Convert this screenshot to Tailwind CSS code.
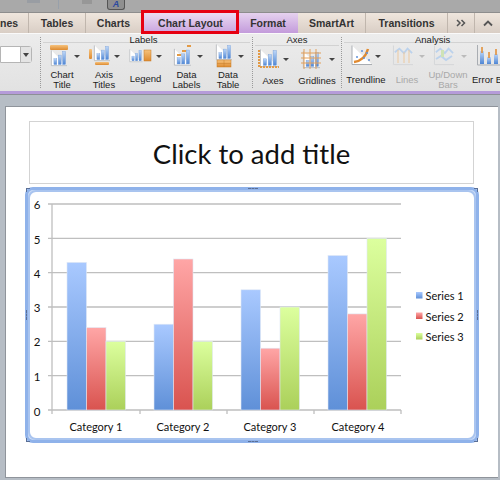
<!DOCTYPE html>
<html lang="en">
<head>
  <meta charset="UTF-8">
  <title>Chart Layout</title>
  <script src="https://cdn.jsdelivr.net/npm/@tailwindcss/browser@4"></script>
</head>
<body class="bg-[#b6bdc5]">

<svg class="absolute w-0 h-0">
  <defs>
    <linearGradient id="blue" x1="0" y1="0" x2="0" y2="1"><stop offset="0" stop-color="#a9c9ff"/><stop offset="1" stop-color="#5f90d8"/></linearGradient>
    <linearGradient id="red" x1="0" y1="0" x2="0" y2="1"><stop offset="0" stop-color="#ffa6a6"/><stop offset="1" stop-color="#d9534f"/></linearGradient>
    <linearGradient id="green" x1="0" y1="0" x2="0" y2="1"><stop offset="0" stop-color="#dcff9e"/><stop offset="1" stop-color="#abd05a"/></linearGradient>
    <linearGradient id="ibar" x1="0" y1="0" x2="0" y2="1"><stop offset="0" stop-color="#bcd6f8"/><stop offset="1" stop-color="#4f86d4"/></linearGradient>
    <linearGradient id="orange" x1="0" y1="0" x2="0" y2="1"><stop offset="0" stop-color="#f6c27c"/><stop offset="1" stop-color="#dd8a30"/></linearGradient>
    <symbol id="bars" viewBox="0 0 22 22" overflow="visible">
      <path d="M0.500 0.500V21.500H22" fill="#fff" stroke="#a9adb2"/>
      <rect x="4" y="12" width="4" height="8" fill="url(#ibar)" stroke="#6f9bd8" stroke-width=".5"/>
      <rect x="10" y="7" width="4" height="13" fill="url(#ibar)" stroke="#6f9bd8" stroke-width=".5"/>
      <rect x="16" y="2" width="4" height="18" fill="url(#ibar)" stroke="#6f9bd8" stroke-width=".5"/>
    </symbol>
    <symbol id="wave" viewBox="0 0 22 22" overflow="visible">
      <path d="M0.500 0.500V21.500H22" fill="none" stroke="#d4d6d8"/>
      <path d="M2 8l5-4 5 5 4-5 5 5" fill="none" stroke="#bcd2ec" stroke-width="2"/>
    </symbol>
  </defs>
</svg>

<div class="relative w-[500px] h-[480px] overflow-hidden flex flex-col font-['Liberation_Sans',sans-serif]">

  <!-- top toolbar -->
  <div class="h-[12px] shrink-0 bg-[#a9a9a9] flex items-start relative">
    <div class="ml-[27px] w-[13px] h-[3px] bg-[#999da3]"></div>
    <div class="ml-[18px] w-px h-[9px] bg-[#98a0aa]"></div>
    <div class="ml-[23px] w-[10px] h-[4px] bg-[#979797]"></div>
    <div class="ml-[15px] w-[18px] h-[10px] bg-[#8f8f8f] border border-t-0 border-[#555] rounded-b-[3px] text-[9px] leading-[9px] font-bold italic text-[#2b4aa0] text-center">A</div>
  </div>

  <!-- tabs -->
  <div class="h-[21px] shrink-0 flex text-[10.5px] font-bold text-[#333] leading-[20px] text-center bg-gradient-to-b from-[#efe6dd] to-[#d9cec5] border-t border-[#8d8d8d]">
    <div class="w-[29px] text-left border-r border-[#c0b6ad]">nes</div>
    <div class="w-[57px] border-r border-[#c0b6ad]">Tables</div>
    <div class="w-[55px]">Charts</div>
    <div class="w-[97px] bg-gradient-to-b from-[#ecdcf3] to-[#c9a3de] pl-[2px]">Chart Layout</div>
    <div class="w-[60px] bg-gradient-to-b from-[#e6d2ef] to-[#c39bdb]">Format</div>
    <div class="w-[68px] border-r border-[#c0b6ad]">SmartArt</div>
    <div class="w-[82px] border-r border-[#c0b6ad]">Transitions</div>
    <div class="w-[27px] border-r border-[#c0b6ad] flex items-center justify-center">
      <svg width="10" height="8" fill="none" stroke="#555" stroke-width="1.500"><path d="M1 1l3 3-3 3M5.500 1l3 3-3 3"/></svg>
    </div>
    <div class="flex-1 flex items-center justify-center">
      <svg width="10" height="7" fill="none" stroke="#555" stroke-width="1.800"><path d="M1 5.500l4-4 4 4"/></svg>
    </div>
  </div>

  <!-- ribbon -->
  <div class="h-[58px] shrink-0 bg-gradient-to-b from-[#ececec] to-[#e2e2e2] border-t border-[#fafafa] flex text-[9.5px] leading-[10px] text-[#222]">
    <div class="w-[41px] shrink-0 border-r border-dotted border-[#9a9a9a] my-[3px] pt-[9px]">
      <div class="w-[32px] h-[17px] flex border border-[#b5b5b5] rounded-r-[3px] bg-white">
        <div class="flex-1"></div>
        <div class="w-[11px] bg-[#e4e4e4] border-l border-[#b5b5b5] flex items-center justify-center">
          <div class="border-x-[3px] border-x-transparent border-t-[4px] border-t-[#444]"></div>
        </div>
      </div>
    </div>

    <!-- Labels -->
    <div class="w-[212px] shrink-0 border-r border-dotted border-[#9a9a9a] my-[3px] flex flex-col">
      <div class="h-[9px] leading-[5px] text-center border-b border-[#d2d2d2] mx-[2px] pr-[6px]">Labels</div>
      <div class="flex pt-[1px]">
        <div class="w-[42px] flex flex-col items-center">
          <svg width="40" height="23" class="block">
            <rect x="8" y="1" width="18" height="5" rx="1" fill="url(#orange)"/>
            <use href="#bars" x="9" y="6" width="16" height="16"/>
            <path d="M32 11h6l-3 3z" fill="#444"/>
          </svg>
          <div class="text-center mt-[3px]">Chart<br>Title</div>
        </div>
        <div class="w-[42px] flex flex-col items-center">
          <svg width="40" height="23" class="block">
            <rect x="5" y="5" width="3" height="10" rx="1" fill="url(#orange)"/>
            <use href="#bars" x="10" y="1" width="16" height="16"/>
            <rect x="11" y="18" width="14" height="3" rx="1" fill="url(#orange)"/>
            <path d="M30 11h6l-3 3z" fill="#444"/>
          </svg>
          <div class="text-center mt-[3px]">Axis<br>Titles</div>
        </div>
        <div class="w-[41px] flex flex-col items-center">
          <svg width="40" height="23" class="block">
            <use href="#bars" x="3" y="5" width="14" height="13"/>
            <rect x="18" y="6" width="7" height="11" fill="url(#orange)" stroke="#c67c2a" stroke-width=".5"/>
            <path d="M30 11h6l-3 3z" fill="#444"/>
          </svg>
          <div class="text-center mt-[7px]">Legend</div>
        </div>
        <div class="w-[41px] flex flex-col items-center">
          <svg width="40" height="23" class="block">
            <use href="#bars" x="7" y="4" width="17" height="18"/>
            <rect x="10" y="10" width="4" height="2" fill="#e39a45"/>
            <rect x="15" y="6" width="4" height="2" fill="#e39a45"/>
            <rect x="20" y="1" width="4" height="2" fill="#e39a45"/>
            <path d="M30 11h6l-3 3z" fill="#444"/>
          </svg>
          <div class="text-center mt-[3px]">Data<br>Labels</div>
        </div>
        <div class="w-[42px] flex flex-col items-center">
          <svg width="40" height="24" class="block">
            <use href="#bars" x="7" y="0" width="18" height="16"/>
            <rect x="9" y="16" width="14" height="7" fill="url(#orange)" stroke="#c67c2a" stroke-width=".5"/>
            <path d="M9 19.500h14M16 16v7" stroke="#c67c2a" stroke-width=".5"/>
            <path d="M30 11h6l-3 3z" fill="#444"/>
          </svg>
          <div class="text-center mt-[2px]">Data<br>Table</div>
        </div>
      </div>
    </div>

    <!-- Axes -->
    <div class="w-[89px] shrink-0 border-r border-dotted border-[#9a9a9a] my-[3px] flex flex-col">
      <div class="h-[9px] leading-[5px] text-center border-b border-[#d2d2d2] mx-[2px]">Axes</div>
      <div class="flex pt-[1px]">
        <div class="w-[40px] flex flex-col items-center pl-[2px]">
          <svg width="38" height="23" class="block">
            <use href="#bars" x="5" y="2" width="18" height="18"/>
            <path d="M4 3v17h20" fill="none" stroke="#e39a45" stroke-width="2" stroke-dasharray="2 1"/>
            <path d="M28 11h6l-3 3z" fill="#444"/>
          </svg>
          <div class="text-center mt-[6px] pr-[2px]">Axes</div>
        </div>
        <div class="w-[48px] flex flex-col items-center">
          <svg width="40" height="23" class="block">
            <use href="#bars" x="6" y="4" width="17" height="17"/>
            <path d="M4 6h20M4 11h20M4 16h20M7 2v20M13 2v20M19 2v20" fill="none" stroke="#e3a05a" stroke-width="1"/>
            <path d="M32 11h6l-3 3z" fill="#444"/>
          </svg>
          <div class="text-center mt-[6px]">Gridlines</div>
        </div>
      </div>
    </div>

    <!-- Analysis -->
    <div class="flex-1 min-w-0 my-[3px] flex flex-col">
      <div class="h-[9px] leading-[5px] border-b border-[#d2d2d2] ml-[2px] pl-[71px]">Analysis</div>
      <div class="flex pt-[1px]">
        <div class="w-[48px] shrink-0 flex flex-col items-center">
          <svg width="40" height="23" class="block">
            <path d="M6 1.500V20.500H26" fill="#fff" stroke="#a9adb2"/>
            <path d="M8 18c8-1 12-6 14-13" fill="none" stroke="#e08a30" stroke-width="2.500"/>
            <circle cx="11" cy="13" r="1" fill="#5f90d8"/><circle cx="18" cy="14" r="1" fill="#5f90d8"/><circle cx="21" cy="9" r="1" fill="#5f90d8"/><circle cx="16" cy="7" r="1" fill="#5f90d8"/><circle cx="23" cy="16" r="1" fill="#5f90d8"/>
            <path d="M29 11h6l-3 3z" fill="#444"/>
          </svg>
          <div class="text-center mt-[8px]">Trendline</div>
        </div>
        <div class="w-[34px] shrink-0 flex flex-col items-center text-[#a9a9a9]">
          <svg width="40" height="23" class="block shrink-0">
            <use href="#wave" x="6" y="1" width="20" height="20"/>
            <path d="M11 6v13M17 8v11M22 6v13" stroke="#ecc9a0"/>
            <path d="M32 11h6l-3 3z" fill="#bbb"/>
          </svg>
          <div class="text-center mt-[8px]">Lines</div>
        </div>
        <div class="w-[48px] shrink-0 flex flex-col items-center text-[#a9a9a9]">
          <svg width="40" height="23" class="block">
            <use href="#wave" x="6" y="1" width="20" height="20"/>
            <path d="M8 15l5-3 5 4 6-4" fill="none" stroke="#bcd2ec" stroke-width="2"/>
            <path d="M13 6h3v7h-3z" fill="#cfe3b6"/>
            <path d="M33 11h6l-3 3z" fill="#bbb"/>
          </svg>
          <div class="text-center mt-[3px] whitespace-nowrap">Up/Down<br>Bars</div>
        </div>
        <div class="w-[40px] shrink-0 flex flex-col items-start">
          <svg width="28" height="23" class="block ml-[5px]">
            <path d="M0.500 1V21H28" fill="none" stroke="#a9adb2"/>
            <rect x="3" y="7" width="4" height="13" fill="url(#ibar)"/>
            <rect x="10" y="13" width="4" height="7" fill="url(#ibar)"/>
            <rect x="17" y="10" width="4" height="10" fill="url(#ibar)"/>
            <path d="M5 3v6M12 8v6M19 5v6" stroke="#e08a30" stroke-width="1.500"/>
          </svg>
          <div class="mt-[8px] whitespace-nowrap">Error Bars</div>
        </div>
      </div>
    </div>
  </div>

  <!-- purple line under ribbon -->
  <div class="h-[4px] shrink-0 bg-[#b59bd9] border-b border-[#8d8f96]"></div>

  <!-- slide area -->
  <div class="flex-1 min-h-0 pt-[11px] pl-[5px] pr-[2px] pb-[3px] flex">
    <div class="flex-1 bg-white border-l border-t border-[#8f949b] pt-[14px] pl-[23px] pr-[24px] shadow-[0_1px_0_#8f949b]">
      <div class="h-[63px] pt-[3px] border border-[#d3d3d3] flex items-center justify-center text-[27.500px] text-[#111] font-['Lato',sans-serif]">Click to add title</div>

      <!-- chart frame -->
      <div class="relative mt-[3px] -ml-[4px] -mr-[5px] h-[256px] rounded-[8px] border-[3px] border-[#8fb2ea] bg-[#c9dbf7]">
        <div class="absolute inset-0 rounded-[8px] border-[2px] border-[#a9c4ef] bg-white overflow-hidden">
          <svg width="444" height="246" viewBox="30 192 444 246" class="block font-['Lato',sans-serif]" font-size="11" fill="#111">
            <g stroke="#bfbfbf" stroke-width="1.300">
              <path d="M48 204H401M48 238.300H401M48 272.700H401M48 307H401M48 341.300H401M48 375.700H401M48 410H401"/>
              <path d="M52 204V410M52 410v4M140 410v4M227 410v4M314 410v4M401 410v4" fill="none"/>
            </g>
            <g stroke="#dfe8f5" stroke-width=".6">
              <rect x="67" y="262.400" width="19.500" height="147.600" fill="url(#blue)"/>
              <rect x="86.500" y="327.600" width="19.500" height="82.400" fill="url(#red)"/>
              <rect x="106" y="341.300" width="19.500" height="68.700" fill="url(#green)"/>
              <rect x="154" y="324.200" width="19.500" height="85.800" fill="url(#blue)"/>
              <rect x="173.500" y="259" width="19.500" height="151" fill="url(#red)"/>
              <rect x="193" y="341.300" width="19.500" height="68.700" fill="url(#green)"/>
              <rect x="241" y="289.800" width="19.500" height="120.200" fill="url(#blue)"/>
              <rect x="260.500" y="348.200" width="19.500" height="61.800" fill="url(#red)"/>
              <rect x="280" y="307" width="19.500" height="103" fill="url(#green)"/>
              <rect x="328" y="255.500" width="19.500" height="154.500" fill="url(#blue)"/>
              <rect x="347.500" y="313.900" width="19.500" height="96.100" fill="url(#red)"/>
              <rect x="367" y="238.300" width="19.500" height="171.700" fill="url(#green)"/>
            </g>
            <g text-anchor="middle" font-size="11.500">
              <text x="37" y="209">6</text>
              <text x="37" y="244">5</text>
              <text x="37" y="278">4</text>
              <text x="37" y="312">3</text>
              <text x="37" y="346">2</text>
              <text x="37" y="381">1</text>
              <text x="37" y="416">0</text>
            </g>
            <g text-anchor="middle">
              <text x="96" y="431">Category 1</text>
              <text x="183" y="431">Category 2</text>
              <text x="270" y="431">Category 3</text>
              <text x="358" y="431">Category 4</text>
            </g>
            <rect x="416" y="292" width="6.500" height="6.500" fill="url(#blue)"/>
            <rect x="416" y="312.500" width="6.500" height="6.500" fill="url(#red)"/>
            <rect x="416" y="333" width="6.500" height="6.500" fill="url(#green)"/>
            <text x="425.500" y="300">Series 1</text>
            <text x="425.500" y="320.500">Series 2</text>
            <text x="425.500" y="341">Series 3</text>
          </svg>
        </div>
        <!-- resize handles -->
        <div class="absolute -top-[2px] -left-[2px] w-[4px] h-[4px] border-t border-l border-dashed border-[#5a6f96]"></div>
        <div class="absolute -top-[2px] left-[220px] w-[10px] border-t border-dashed border-[#5a6f96]"></div>
        <div class="absolute -top-[2px] -right-[2px] w-[4px] h-[4px] border-t border-r border-dashed border-[#5a6f96]"></div>
        <div class="absolute top-[120px] -left-[2px] h-[10px] border-l border-dashed border-[#5a6f96]"></div>
        <div class="absolute top-[120px] -right-[2px] h-[10px] border-r border-dashed border-[#5a6f96]"></div>
        <div class="absolute -bottom-[2px] -left-[2px] w-[4px] h-[4px] border-b border-l border-dashed border-[#5a6f96]"></div>
        <div class="absolute -bottom-[2px] left-[220px] w-[10px] border-b border-dashed border-[#5a6f96]"></div>
        <div class="absolute -bottom-[2px] -right-[2px] w-[4px] h-[4px] border-b border-r border-dashed border-[#5a6f96]"></div>
      </div>
    </div>
  </div>

  <!-- red highlight on the tab -->
  <div class="absolute left-[141px] top-[10px] w-[98px] h-[24px] border-[3px] border-[#e60012]"></div>
</div>

</body>
</html>
